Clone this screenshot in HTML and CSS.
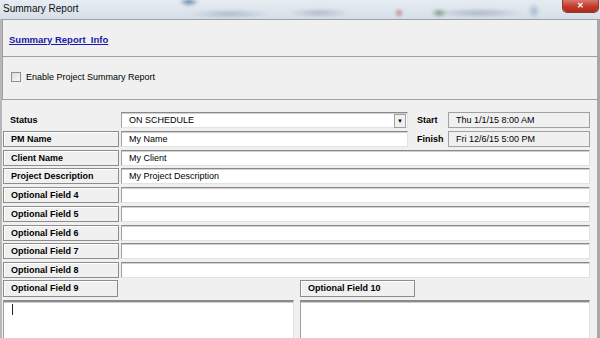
FILE: index.html
```html
<!DOCTYPE html>
<html lang="en">
<head>
    <meta charset="UTF-8">
    <title>Summary Report</title>
    <link rel="stylesheet" href="styles.css">
</head>
<body>

<div class="window">
    <div class="titlebar">
        <span class="title">Summary Report</span>
        <div class="blur"></div>
        <div class="close">&#x2715;</div>
    </div>

    <div class="content">
        <div class="panel info">
            <a href="#">Summary Report&nbsp; Info</a>
        </div>

        <div class="panel enable">
            <label><span class="check"></span>Enable Project Summary Report</label>
        </div>

        <div class="form">
            <div class="plain-label">Status</div>
            <div class="field select">ON SCHEDULE<span class="arrow">&#9660;</span></div>
            <div class="side-label">Start</div>
            <div class="field readonly">Thu 1/1/15 8:00 AM</div>

            <div class="box-label">PM Name</div>
            <div class="field">My Name</div>
            <div class="side-label">Finish</div>
            <div class="field readonly">Fri 12/6/15 5:00 PM</div>

            <div class="box-label">Client Name</div>
            <div class="field wide">My Client</div>

            <div class="box-label">Project Description</div>
            <div class="field wide">My Project Description</div>

            <div class="box-label">Optional Field 4</div>
            <div class="field wide"></div>

            <div class="box-label">Optional Field 5</div>
            <div class="field wide"></div>

            <div class="box-label">Optional Field 6</div>
            <div class="field wide"></div>

            <div class="box-label">Optional Field 7</div>
            <div class="field wide"></div>

            <div class="box-label">Optional Field 8</div>
            <div class="field wide"></div>
        </div>

        <div class="notes">
            <div class="note left">
                <div class="box-label">Optional Field 9</div>
                <div class="field area"><span class="caret"></span></div>
            </div>
            <div class="note right">
                <div class="box-label">Optional Field 10</div>
                <div class="field area"></div>
            </div>
        </div>
    </div>
</div>

</body>
</html>
```

FILE: styles.css
```css
body {
    margin: 0;
    font-family: "Liberation Sans", Arial, sans-serif;
    font-size: 9px;
    color: #000;
    background: #f0f0f0;
    overflow: hidden;
}

.window {
    width: 600px;
    height: 338px;
    overflow: hidden;
}

.titlebar {
    height: 19px;
    display: flex;
    align-items: flex-start;
    background: linear-gradient(to bottom, #e6ecf2, #d6dfe8);
    position: relative;
    overflow: hidden;
}
.title {
    font-family: "Liberation Sans", Arial, sans-serif;
    font-size: 10px;
    line-height: 17px;
    padding-left: 3px;
    color: #111;
    position: relative;
    z-index: 1;
}
.blur {
    flex: 1;
    height: 19px;
    background:
        radial-gradient(ellipse 10px 6px at 110px 1px, #5f82a8, transparent),
        radial-gradient(ellipse 40px 5px at 150px 14px, #aebccd, transparent),
        radial-gradient(ellipse 30px 5px at 240px 13px, #b3bcc7, transparent),
        radial-gradient(ellipse 5px 5px at 320px 13px, #c08a8a, transparent),
        radial-gradient(ellipse 8px 5px at 360px 13px, #7fa08a, transparent),
        radial-gradient(ellipse 45px 5px at 400px 13px, #aeb8c4, transparent),
        radial-gradient(ellipse 6px 8px at 455px 11px, #a6b9cf, transparent);
    filter: blur(1px);
}
.close {
    position: absolute;
    right: 2px;
    top: 0;
    width: 35px;
    height: 12px;
    border-radius: 0 0 4px 4px;
    background: linear-gradient(to bottom, #d9776a, #c0392b 55%, #b02a18);
    box-shadow: 0 0 0 1px #8c3a30;
    color: #fff;
    font-size: 8px;
    font-weight: bold;
    text-align: center;
    line-height: 11px;
}

.content {
    height: 319px;
    border-left: 2px solid #b8b8b8;
    border-right: 3px solid #a8a8a8;
    box-sizing: border-box;
}

.panel {
    border: 1px solid #a0a0a0;
    border-right: none;
}
.info {
    height: 38px;
    padding: 14px 0 0 6px;
    box-sizing: border-box;
}
.info a {
    color: #1a1aa6;
    font-weight: bold;
    font-size: 9.5px;
}
.enable {
    border-top: none;
    height: 43px;
    padding: 15px 0 0 8px;
    box-sizing: border-box;
}
.enable label {
    display: flex;
    align-items: center;
    gap: 5px;
}
.check {
    width: 8px;
    height: 8px;
    border: 1px solid #8e8f8f;
    background: linear-gradient(135deg, #dcdcdc, #fafafa);
}

.form {
    display: grid;
    grid-template-columns: 116px 287px 36px 142px;
    grid-auto-rows: 16px;
    column-gap: 2px;
    row-gap: 2.75px;
    padding: 12px 0 0 1px;
}
.plain-label {
    font-weight: bold;
    padding-left: 7px;
    line-height: 17px;
}
.side-label {
    font-weight: bold;
    padding-left: 7px;
    line-height: 16px;
}
.box-label {
    font-weight: bold;
    padding-left: 7px;
    line-height: 14px;
    border: 1px solid #8c8c8c;
    box-shadow: inset 1px 1px #fff;
    background: #f0f0f0;
}
.field {
    background: #fff;
    border: 1px solid;
    border-color: #8a8a8a #e2e2e2 #e2e2e2 #a0a0a0;
    box-shadow: inset 0 1px #cfcfcf;
    padding-left: 7px;
    line-height: 15px;
    position: relative;
}
.wide {
    grid-column: 2 / 5;
}
.arrow {
    position: absolute;
    right: 1px;
    top: 1px;
    width: 10px;
    height: 12px;
    font-size: 6px;
    line-height: 12px;
    text-align: center;
    border: 1px solid #a0a0a0;
    background: #f0f0f0;
}
.readonly {
    background: #f0f0f0;
    border: 1px solid #a0a0a0;
    box-shadow: none;
}

.notes {
    display: flex;
    gap: 6px;
    padding: 2px 0 0 1px;
}
.note {
    display: flex;
    flex-direction: column;
    gap: 3px;
}
.left {
    width: 291px;
}
.right {
    width: 290px;
}
.note .box-label {
    width: 106px;
    height: 15px;
    line-height: 15px;
}
.area {
    height: 40px;
    border-top: 2px solid #8a8a8a;
}
.caret {
    display: block;
    width: 1px;
    height: 11px;
    margin: 2px 0 0 1px;
    background: #222;
}
```
